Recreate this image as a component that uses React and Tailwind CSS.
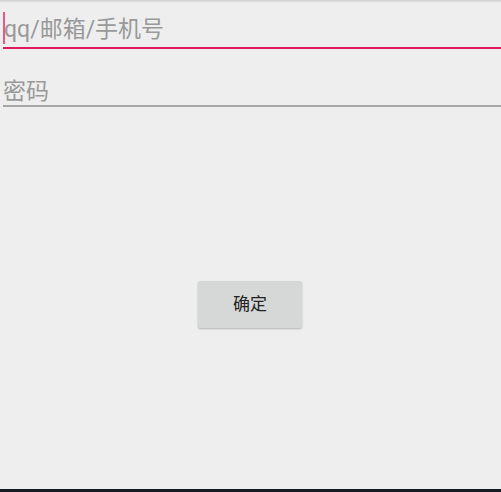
export default function App() {
  return (
    <div className="relative h-[492px] w-[501px] overflow-hidden bg-[#eeeeee] font-['Roboto','Noto_Sans_CJK_SC',sans-serif]">
      {/* status shadow */}
      <div className="h-[3px] bg-gradient-to-b from-[#cfcfcf] to-[#eeeeee]" />

      {/* 账号 */}
      <div className="ml-[3px] h-[46px] border-b-2 border-[#e2185f] pt-[9px]">
        <div className="flex h-[32px] items-center">
          <span className="mr-[-1px] h-[32px] w-[2px] bg-[#e2185f] opacity-70" />
          <span className="pt-[3px] text-[23px] leading-none text-[#999999]">qq/邮箱/手机号</span>
        </div>
      </div>

      {/* 密码 */}
      <div className="ml-[3px] h-[58px] border-b-2 border-[#a6a6a6] pt-[31px]">
        <span className="text-[23px] leading-none text-[#999999]">密码</span>
      </div>

      <div className="flex justify-center pt-[174px]">
        <button className="ml-[-1px] h-[47px] w-[104px] rounded-[2px] bg-[#d6d7d7] text-[17px] text-[#222222] shadow-[0_1px_2px_rgba(0,0,0,0.25)]">
          确定
        </button>
      </div>

      <div className="absolute bottom-0 left-0 h-[3px] w-full bg-[#151a24]" />
    </div>
  );
}
